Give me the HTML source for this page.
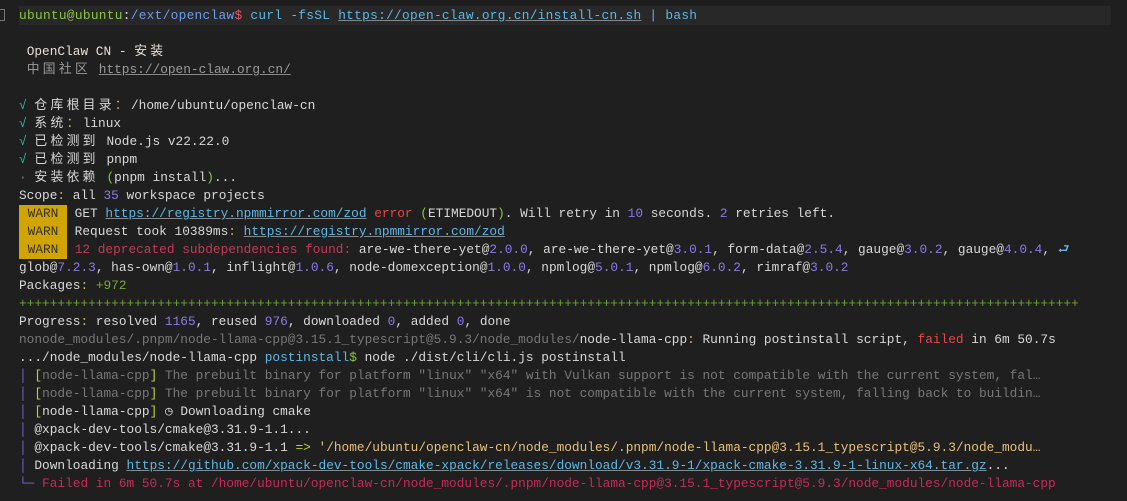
<!DOCTYPE html>
<html><head><meta charset="utf-8"><style>
html,body{margin:0;padding:0;background:#1f1f1f;width:1127px;height:501px;overflow:hidden}
body{position:relative;font-family:"Liberation Mono","Noto Sans CJK SC",monospace;font-size:12.8px;color:#d8d8d8}
.l{position:absolute;left:19px;white-space:pre;height:18px;line-height:18px}
.top{position:absolute;left:19px;top:6px;width:1092px;height:19px;background:#282828}
.side{position:absolute;left:0;top:9px;width:5px;height:12px;border:1px solid #777;border-left:none;box-sizing:border-box}
.k{letter-spacing:3.3px;font-family:"Noto Sans CJK SC",sans-serif;line-height:1;display:inline-block;vertical-align:top;position:relative;top:1px}
.g{color:#8cc63f}.b{color:#6b9cf0}.r{color:#e8566a}.c{color:#5cb8e6}.u{text-decoration:underline;text-decoration-color:#888}
.gr{color:#9a9a9a}.dg{color:#777}.t{color:#2bc3a6}.p{color:#8b7ae6}.y{color:#c9b458}
.warn{background:#d2a400;color:#333;display:inline-block;width:48px;text-align:center;height:18px}
.er{color:#e8454a}.dp{color:#c8365a}.pk{color:#7aa834}.pl{color:#6ea22e}
.pipe{color:#7d66d8}.br{color:#b7d43a}.fl{color:#c82a58}.cw{color:#e6c07a}
</style></head><body>
<div class="top"></div><div class="side"></div>
<div class="l" style="top:7px;letter-spacing:0.3px"><span class="g">ubuntu@ubuntu</span>:<span class="b">/ext/openclaw</span><span class="r">$</span> <span class="c">curl -fsSL </span><span class="c u">https://open-claw.org.cn/install-cn.sh</span> <span class="c">| bash</span></div>
<div class="l" style="top:43px"> <span style="color:#e8e0d8">OpenClaw CN - <span class="k">安装</span></span></div>
<div class="l" style="top:61px"> <span class="gr"><span class="k">中国社区</span> </span><span class="gr u">https://open-claw.org.cn/</span></div>
<div class="l" style="top:97px"><span class="t">√</span> <span class="k">仓库根目录<span class="y">：</span></span>/home/ubuntu/openclaw-cn</div>
<div class="l" style="top:115px"><span class="t">√</span> <span class="k">系统<span class="y">：</span></span>linux</div>
<div class="l" style="top:133px"><span class="t">√</span> <span class="k">已检测到</span> Node.js v22.22.0</div>
<div class="l" style="top:151px"><span class="t">√</span> <span class="k">已检测到</span> pnpm</div>
<div class="l" style="top:169px"><span class="dg">·</span> <span class="k">安装依赖</span> <span class="g">(</span>pnpm install<span class="g">)</span>...</div>
<div class="l" style="top:187px">Scope<span class="y">:</span> all <span class="p">35</span> workspace projects</div>
<div class="l" style="top:205px"><span class="warn">WARN</span> GET <span class="c u">https://registry.npmmirror.com/zod</span> <span class="er">error</span> <span class="g">(</span>ETIMEDOUT<span class="g">)</span>. Will retry in <span class="p">10</span> seconds. <span class="p">2</span> retries left.</div>
<div class="l" style="top:223px"><span class="warn">WARN</span> Request took 10389ms<span class="y">:</span> <span class="c u">https://registry.npmmirror.com/zod</span></div>
<div class="l" style="top:241px"><span class="warn">WARN</span> <span class="dp">12 deprecated subdependencies found:</span> are-we-there-yet@<span class="p">2.0.0</span>, are-we-there-yet@<span class="p">3.0.1</span>, form-data@<span class="p">2.5.4</span>, gauge@<span class="p">3.0.2</span>, gauge@<span class="p">4.0.4</span>, <span class="c">⮐</span></div>
<div class="l" style="top:259px">glob@<span class="p">7.2.3</span>, has-own@<span class="p">1.0.1</span>, inflight@<span class="p">1.0.6</span>, node-domexception@<span class="p">1.0.0</span>, npmlog@<span class="p">5.0.1</span>, npmlog@<span class="p">6.0.2</span>, rimraf@<span class="p">3.0.2</span></div>
<div class="l" style="top:277px">Packages<span class="y">:</span> <span class="pk">+972</span></div>
<div class="l pl" style="top:295px">++++++++++++++++++++++++++++++++++++++++++++++++++++++++++++++++++++++++++++++++++++++++++++++++++++++++++++++++++++++++++++++++++++++++++</div>
<div class="l" style="top:313px">Progress<span class="y">:</span> resolved <span class="p">1165</span>, reused <span class="p">976</span>, downloaded <span class="p">0</span>, added <span class="p">0</span>, done</div>
<div class="l" style="top:331px"><span class="dg">nonode_modules/.pnpm/node-llama-cpp@3.15.1_typescript@5.9.3/node_modules/</span>node-llama-cpp<span class="y">:</span> Running postinstall script, <span class="er">failed</span> in 6m 50.7s</div>
<div class="l" style="top:349px">.../node_modules/node-llama-cpp <span class="c">postinstall</span><span class="g">$</span> node ./dist/cli/cli.js postinstall</div>
<div class="l" style="top:367px"><span class="pipe">│</span> <span class="br">[</span><span class="dg">node-llama-cpp</span><span class="br">]</span><span class="dg"> The prebuilt binary for platform "linux" "x64" with Vulkan support is not compatible with the current system, fal…</span></div>
<div class="l" style="top:385px"><span class="pipe">│</span> <span class="br">[</span><span class="dg">node-llama-cpp</span><span class="br">]</span><span class="dg"> The prebuilt binary for platform "linux" "x64" is not compatible with the current system, falling back to buildin…</span></div>
<div class="l" style="top:403px"><span class="pipe">│</span> <span class="br">[</span>node-llama-cpp<span class="br">]</span> ◷ Downloading cmake</div>
<div class="l" style="top:421px"><span class="pipe">│</span> @xpack-dev-tools/cmake@3.31.9-1.1...</div>
<div class="l" style="top:439px"><span class="pipe">│</span> @xpack-dev-tools/cmake@3.31.9-1.1 <span class="br">=&gt;</span> <span class="cw">'/home/ubuntu/openclaw-cn/node_modules/.pnpm/node-llama-cpp@3.15.1_typescript@5.9.3/node_modu…</span></div>
<div class="l" style="top:457px"><span class="pipe">│</span> Downloading <span class="c u">https://github.com/xpack-dev-tools/cmake-xpack/releases/download/v3.31.9-1/xpack-cmake-3.31.9-1-linux-x64.tar.gz</span>...</div>
<div class="l" style="top:475px"><span class="pipe">└─</span> <span class="fl">Failed in 6m 50.7s at /home/ubuntu/openclaw-cn/node_modules/.pnpm/node-llama-cpp@3.15.1_typescript@5.9.3/node_modules/node-llama-cpp</span></div>
</body></html>
